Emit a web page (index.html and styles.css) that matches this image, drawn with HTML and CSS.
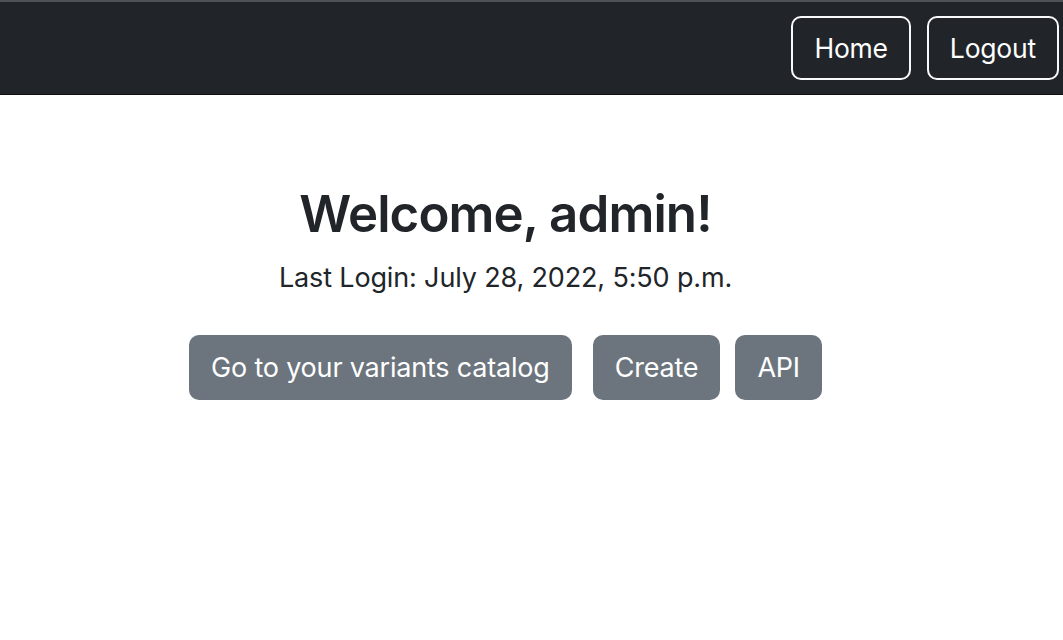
FILE: index.html
```html
<!DOCTYPE html>
<html lang="en">
<head>
<meta charset="utf-8">
<title>Welcome</title>
<link rel="stylesheet" href="styles.css">
</head>
<body>
<nav class="navbar">
  <a class="nav-btn" href="#">Home</a>
  <a class="nav-btn" href="#">Logout</a>
</nav>
<main class="main">
  <h1 class="title">Welcome, admin!</h1>
  <p class="last-login">Last Login: July 28, 2022, 5:50 p.m.</p>
  <div class="actions">
    <a class="btn btn-wide" href="#">Go to your variants catalog</a>
    <a class="btn btn-create" href="#">Create</a>
    <a class="btn" href="#">API</a>
  </div>
</main>
</body>
</html>
```
FILE: styles.css
```css
* { box-sizing: border-box; }
html, body { margin: 0; padding: 0; background: #fff; }
body {
  font-family: Inter, "Liberation Sans", sans-serif;
  color: #212529;
}
.navbar {
  height: 95px;
  background: #212529;
  border-top: 2px solid #4e5155;
  border-bottom: 1px solid #0d0f11;
  display: flex;
  justify-content: flex-end;
  align-items: flex-start;
  gap: 16px;
  padding: 14px 4px 0 0;
}
.nav-btn {
  display: flex;
  align-items: center;
  justify-content: center;
  height: 64px;
  padding: 0 21px;
  border: 2px solid #f8f9fa;
  border-radius: 10px;
  color: #fff;
  text-decoration: none;
  font-size: 26.5px;
  letter-spacing: -0.2px;
}
.main {
  width: 1011px;
  display: flex;
  flex-direction: column;
  align-items: center;
  padding-top: 88px;
}
.title {
  margin: 0;
  font-size: 51px;
  font-weight: 600;
  line-height: 1.2;
  letter-spacing: -0.9px;
}
.last-login {
  margin: 14px 0 0;
  font-size: 27px;
  line-height: 1.5;
  letter-spacing: -0.15px;
}
.actions {
  display: flex;
  margin-top: 36px;
}
.btn {
  display: flex;
  align-items: center;
  justify-content: center;
  height: 65px;
  padding: 0 22px;
  background: #6c757d;
  border-radius: 10px;
  color: #fff;
  text-decoration: none;
  font-size: 27px;
  letter-spacing: -0.2px;
}
.btn-wide { margin-right: 21px; }
.btn-create { margin-right: 15px; }
```
